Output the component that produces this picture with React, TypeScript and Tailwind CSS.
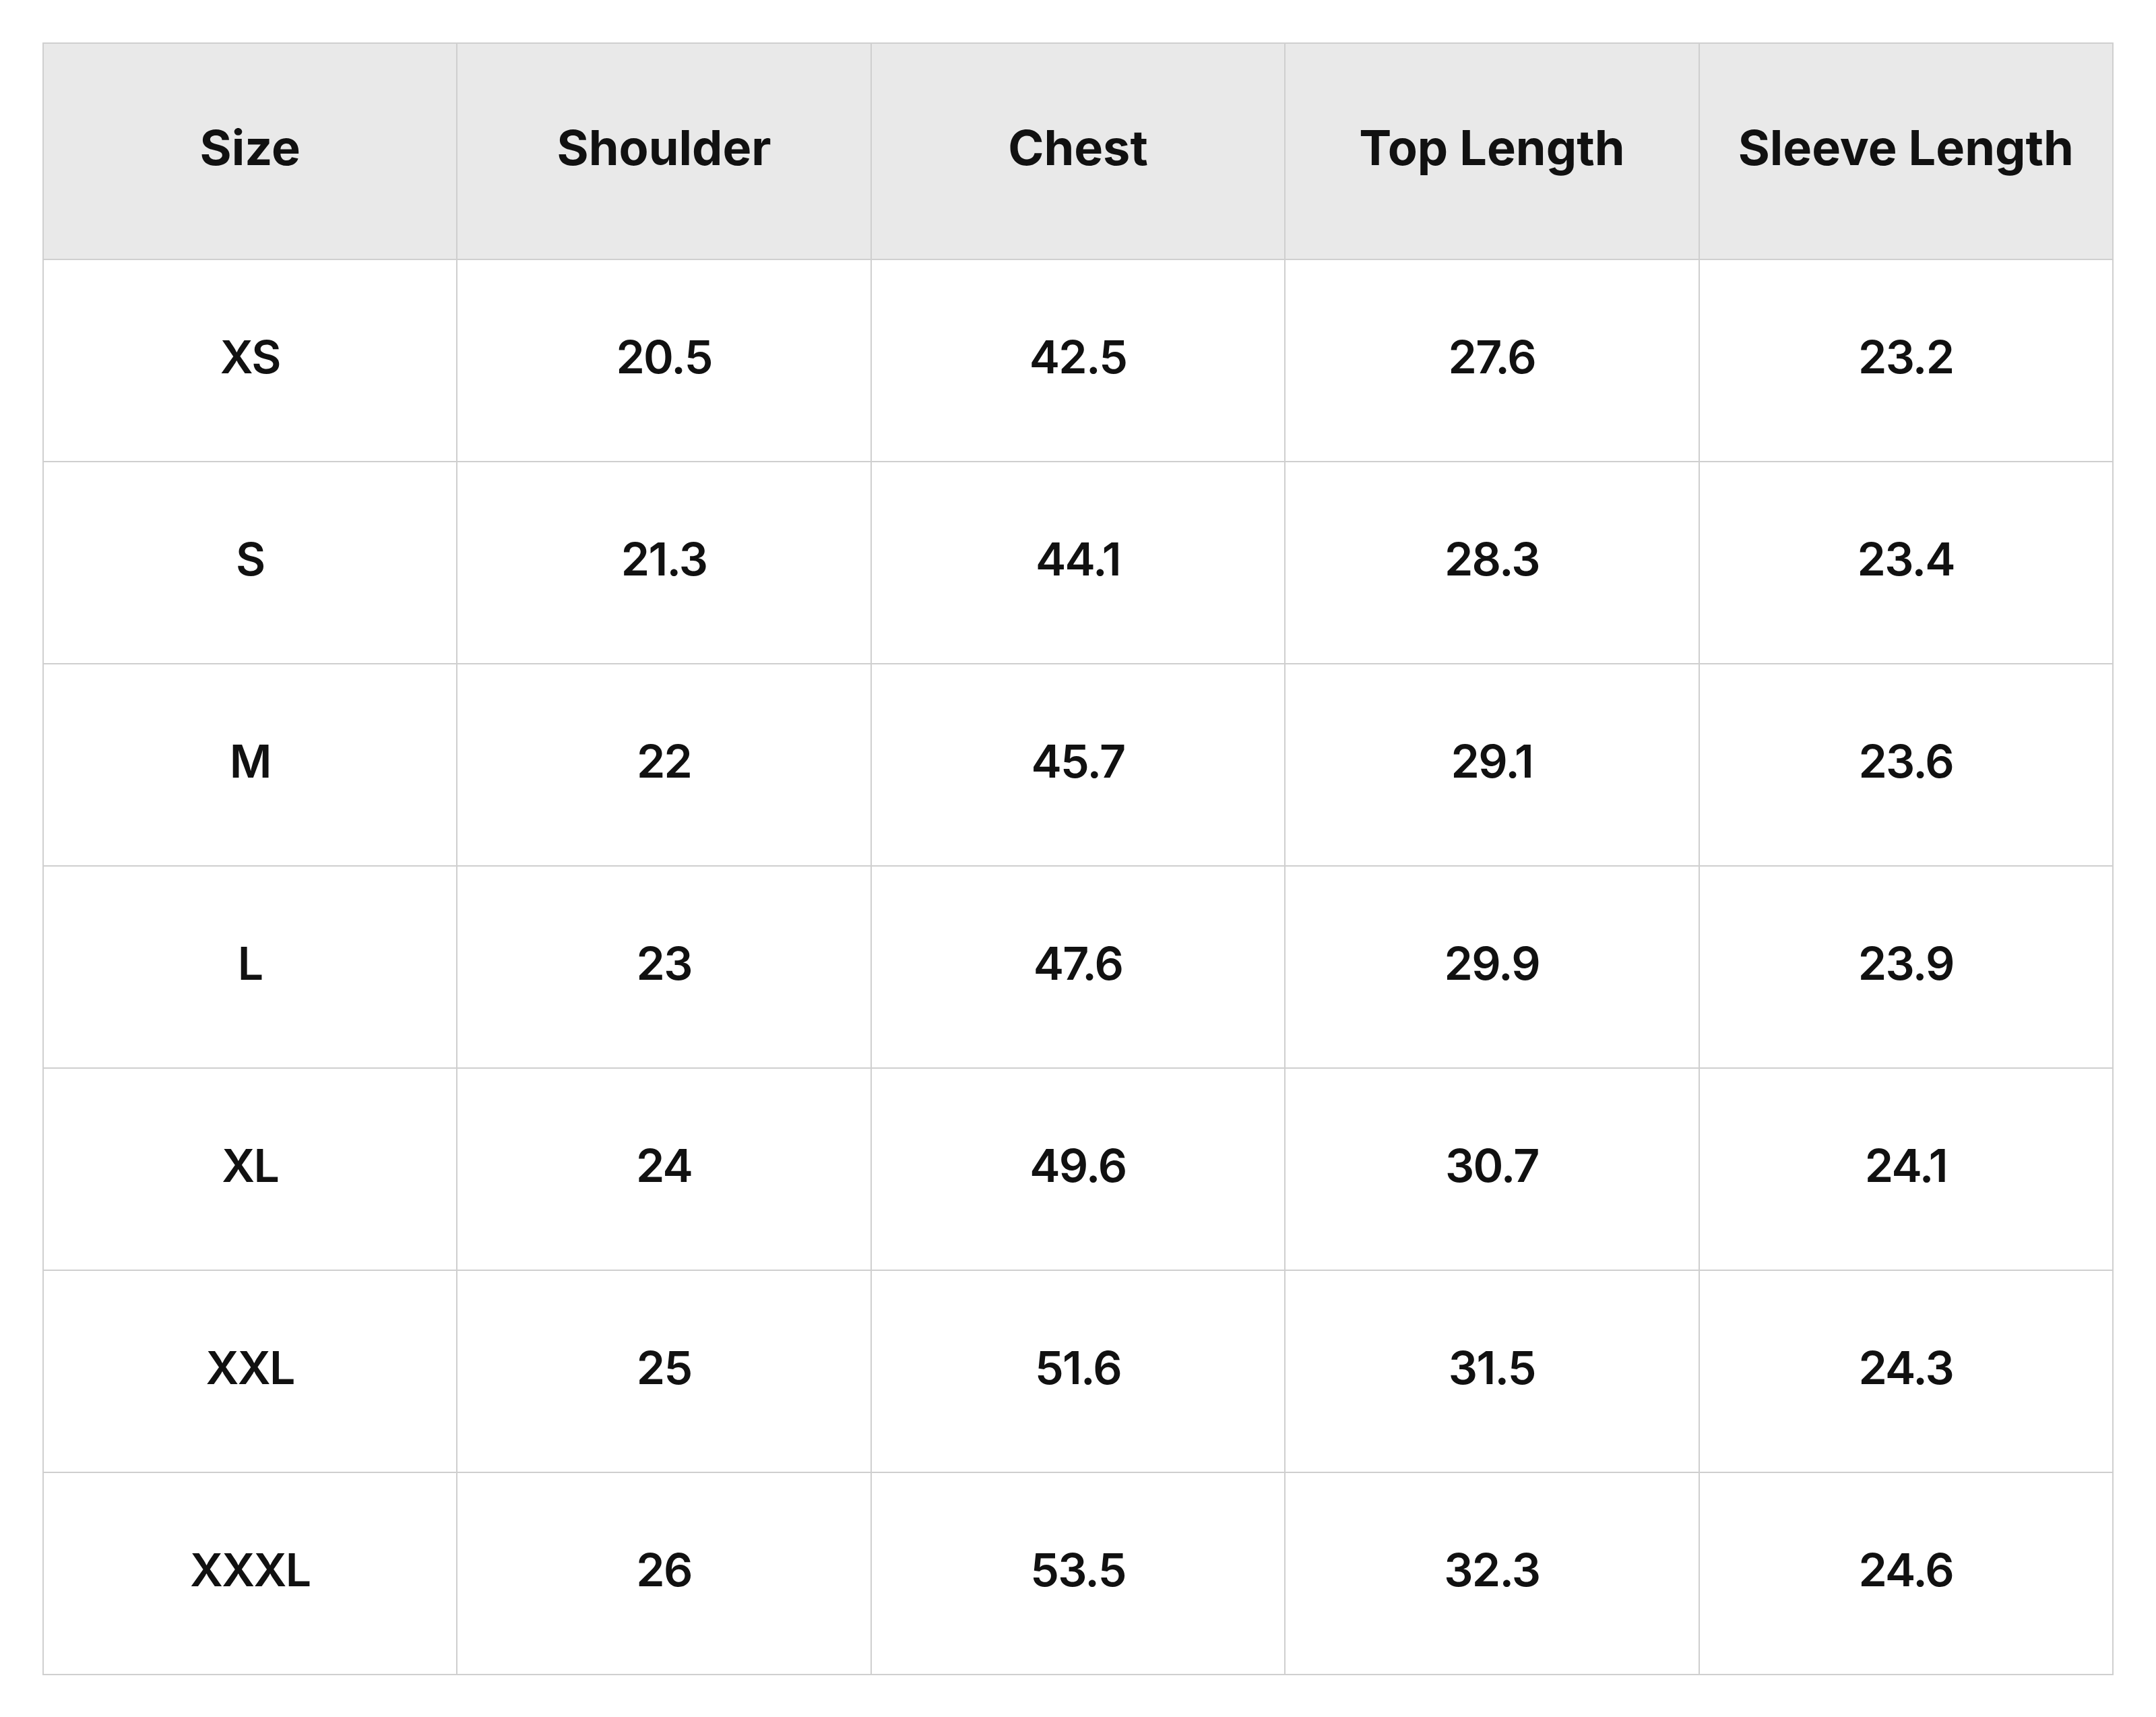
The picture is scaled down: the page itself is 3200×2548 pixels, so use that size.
const headers = ['Size', 'Shoulder', 'Chest', 'Top Length', 'Sleeve Length']

const rows = [
  ['XS', '20.5', '42.5', '27.6', '23.2'],
  ['S', '21.3', '44.1', '28.3', '23.4'],
  ['M', '22', '45.7', '29.1', '23.6'],
  ['L', '23', '47.6', '29.9', '23.9'],
  ['XL', '24', '49.6', '30.7', '24.1'],
  ['XXL', '25', '51.6', '31.5', '24.3'],
  ['XXXL', '26', '53.5', '32.3', '24.6'],
]

const SizeChart = () => {
  return (
    <div className="bg-white min-h-screen px-[63px] pt-[63px] font-['Inter',sans-serif] text-[#111111]">
      <table className="w-full table-fixed border-collapse border-2 border-[#cfcfcf]">
        <thead>
          <tr className="bg-[#e9e9e9]">
            {headers.map((h) => (
              <th
                key={h}
                className="h-[321px] pb-3 border-2 border-[#cfcfcf] text-center align-middle text-[72px] font-bold"
              >
                {h}
              </th>
            ))}
          </tr>
        </thead>
        <tbody>
          {rows.map((row) => (
            <tr key={row[0]}>
              {row.map((cell, i) => (
                <td
                  key={i}
                  className="h-[300px] pb-3 border-2 border-[#cfcfcf] text-center align-middle text-[68px] font-semibold tracking-tight"
                >
                  {cell}
                </td>
              ))}
            </tr>
          ))}
        </tbody>
      </table>
    </div>
  )
}

export default SizeChart
